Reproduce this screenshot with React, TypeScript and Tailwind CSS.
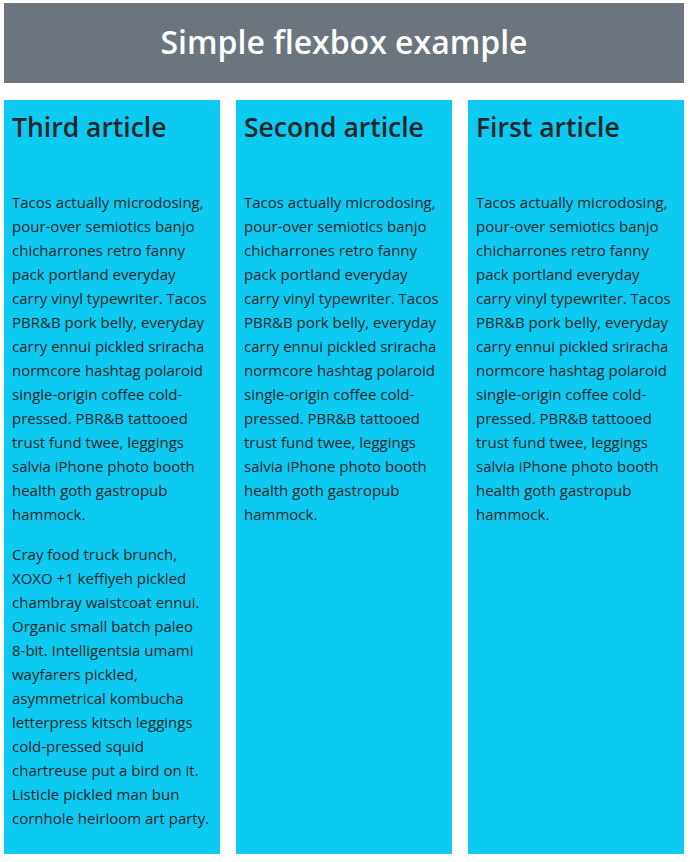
const p1 =
  'Tacos actually microdosing, pour-over semiotics banjo chicharrones retro fanny pack portland everyday carry vinyl typewriter. Tacos PBR&B pork belly, everyday carry ennui pickled sriracha normcore hashtag polaroid single-origin coffee cold-pressed. PBR&B tattooed trust fund twee, leggings salvia iPhone photo booth health goth gastropub hammock.'

const p2 = (
  <>
    Cray food truck brunch, XOXO +1 keffiyeh pickled chambray waistcoat ennui. Organic small batch paleo{' '}
    <span className="whitespace-nowrap">8-bit.</span> Intelligentsia umami wayfarers pickled, asymmetrical kombucha
    letterpress kitsch leggings cold-pressed squid chartreuse put a bird on it. Listicle pickled man bun cornhole
    heirloom art party.
  </>
)

const articles = [
  { title: 'Third article', paras: [p1, p2] },
  { title: 'Second article', paras: [p1] },
  { title: 'First article', paras: [p1] },
]

export default function App() {
  return (
    <div className="min-h-[862px] bg-white pl-[4px] pr-[6px] pt-[3px] font-['Open_Sans',sans-serif] text-[#212529]">
      <header className="flex h-[80px] items-center justify-center bg-[#6c757d] pb-[3px]">
        <h1 className="text-[32px] font-semibold text-white">Simple flexbox example</h1>
      </header>
      <section className="mt-[17px] flex gap-4">
        {articles.map((a) => (
          <article key={a.title} className="w-[216px] bg-[#0dcaf0] px-2 pt-2 pb-2">
            <h2 className="text-[26.5px] font-semibold leading-[38px]">{a.title}</h2>
            <div className="mt-[44px] flex flex-col gap-4">
              {a.paras.map((t, i) => (
                <p key={i} className="text-[15px] leading-6">
                  {t}
                </p>
              ))}
            </div>
            <div className="h-4" />
          </article>
        ))}
      </section>
    </div>
  )
}
